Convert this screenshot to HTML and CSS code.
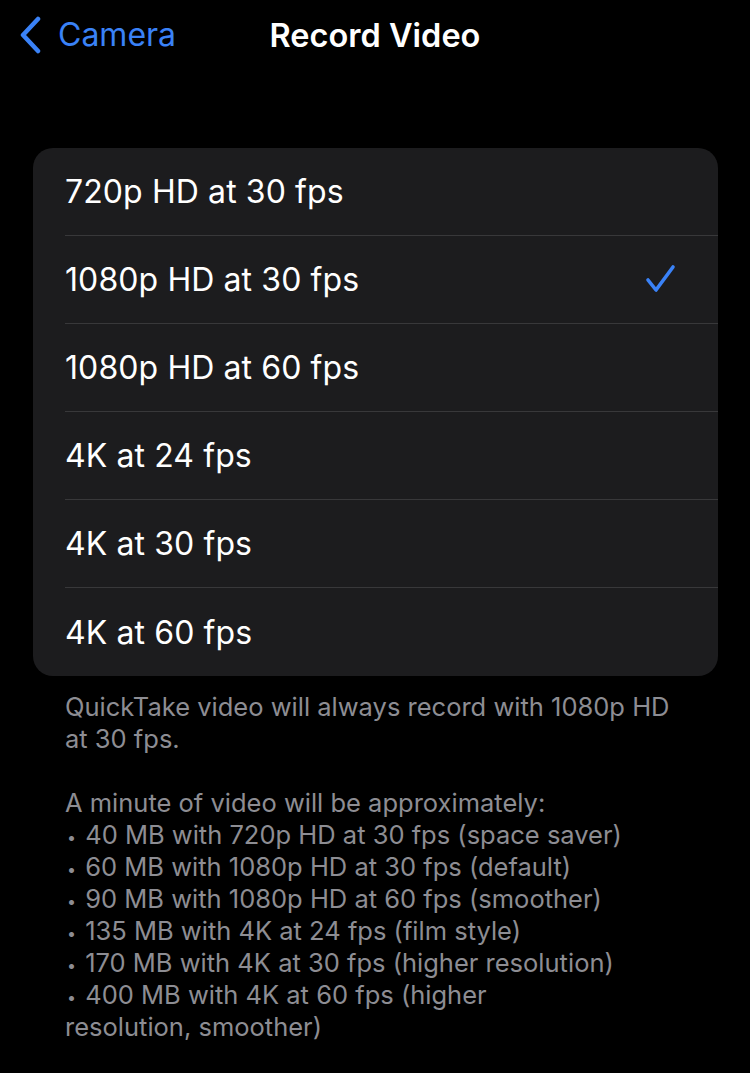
FILE: index.html
```html
<!DOCTYPE html>
<html>
<head>
  <title>Record Video</title>
  <link rel="stylesheet" href="styles.css">
</head>
<body>
  <div class="nav-bar">
    <div class="nav-back">
      <svg class="chevron" width="24" height="38" viewBox="0 0 24 38">
        <path d="M20 3 L5 19 L20 35" fill="none" stroke="#3a82f7" stroke-width="4.5" stroke-linecap="round" stroke-linejoin="round"/>
      </svg>
      <span>Camera</span>
    </div>
    <div class="nav-title">Record Video</div>
  </div>

  <!-- list of video formats -->
  <div class="group">
    <div class="row"><span>720p HD at 30 fps</span></div>
    <div class="row selected">
      <span>1080p HD at 30 fps</span>
      <svg class="check" width="34" height="32" viewBox="0 0 34 32">
        <path d="M4 16 L12 26 L29 3" fill="none" stroke="#3a82f7" stroke-width="3.6" stroke-linecap="round" stroke-linejoin="round"/>
      </svg>
    </div>
    <div class="row"><span>1080p HD at 60 fps</span></div>
    <div class="row"><span>4K at 24 fps</span></div>
    <div class="row"><span>4K at 30 fps</span></div>
    <div class="row last"><span>4K at 60 fps</span></div>
  </div>

  <div class="footer">
    <p>QuickTake video will always record with 1080p HD at 30 fps.</p>
    <p>A minute of video will be approximately:<br>
    <span class="dot">•</span> 40 MB with 720p HD at 30 fps (space saver)<br>
    <span class="dot">•</span> 60 MB with 1080p HD at 30 fps (default)<br>
    <span class="dot">•</span> 90 MB with 1080p HD at 60 fps (smoother)<br>
    <span class="dot">•</span> 135 MB with 4K at 24 fps (film style)<br>
    <span class="dot">•</span> 170 MB with 4K at 30 fps (higher resolution)<br>
    <span class="dot">•</span> 400 MB with 4K at 60 fps (higher<br>resolution, smoother)</p>
  </div>
</body>
</html>
```

FILE: styles.css
```css
body {
  margin: 0;
  background-color: #000;
  color: #fff;
  font-family: Inter, "Noto Sans", sans-serif;
  width: 750px;
}

.nav-bar {
  height: 70px;
  position: relative;
  display: flex;
  align-items: center;
  justify-content: center;
}

.nav-back {
  position: absolute;
  left: 18px;
  top: 15px;
  display: flex;
  align-items: center;
  color: #3a82f7;
  font-size: 32px;
}

.nav-back span {
  margin-left: 16px;
}

.nav-title {
  font-size: 32.5px;
  font-weight: 600;
}

.group {
  margin: 78px 32px 0 33px;
  background-color: #1c1c1e;
  border-radius: 20px;
  overflow: hidden;
}

.row {
  box-sizing: border-box;
  height: 88px;
  margin-left: 32px;
  padding-right: 40px;
  display: flex;
  align-items: center;
  justify-content: space-between;
  border-bottom: 1px solid #38383a;
  font-size: 32px;
  letter-spacing: 0.1px;
}

.row.last {
  border-bottom: none;
}

.footer {
  padding: 15px 64px 0 65px;
  color: #8d8d93;
  font-size: 25.5px;
  line-height: 32px;
}

.footer p {
  margin: 0 0 32px 0;
}

.dot {
  display: inline-block;
  font-size: 16px;
  line-height: 16px;
  width: 11px;
  margin-left: 2px;
  vertical-align: 1px;
}
```
